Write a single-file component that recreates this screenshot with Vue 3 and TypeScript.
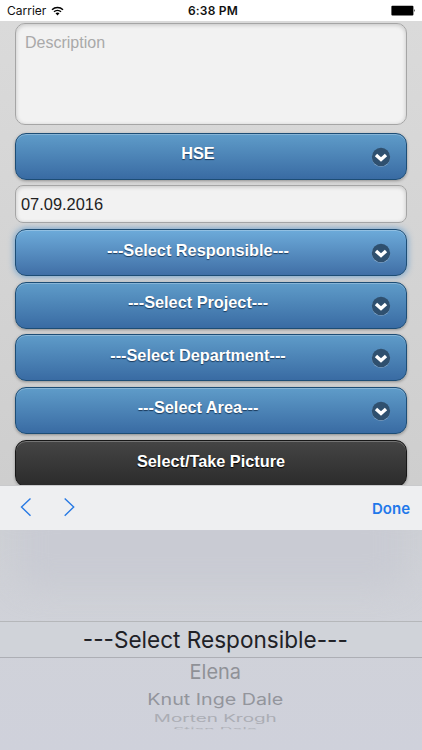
<script setup lang="ts">
interface SelectField {
  id: string
  label: string
  focused?: boolean
}

interface WheelRow {
  text: string
  width: number
  baseline: number
  size: number
  squash: number
  color: string
}

const category: SelectField = { id: 'category', label: 'HSE' }

const fields: SelectField[] = [
  { id: 'responsible', label: '---Select Responsible---', focused: true },
  { id: 'project', label: '---Select Project---' },
  { id: 'department', label: '---Select Department---' },
  { id: 'area', label: '---Select Area---' },
]

// Rows turn away from the viewer below the selection band.
const wheel: WheelRow[] = [
  { text: '---Select Responsible---', width: 265, baseline: 118.4, size: 23.3, squash: 1, color: '#202126' },
  { text: 'Elena', width: 51.5, baseline: 149.2, size: 21, squash: 0.97, color: '#8f9197' },
  { text: 'Knut Inge Dale', width: 136, baseline: 174.8, size: 20, squash: 0.8, color: '#93959c' },
  { text: 'Morten Krogh', width: 123, baseline: 192.4, size: 19, squash: 0.54, color: '#abadb4' },
]
const lastRow: WheelRow = { text: 'Stian Dale', width: 84, baseline: 201.8, size: 18, squash: 0.32, color: '#b0b2b9' }
</script>

<template>
  <div class="phone">
    <header class="status">
      <div class="carrier">
        <span>Carrier</span>
        <svg class="wifi" width="13" height="10" viewBox="0 0 13 10">
          <path d="M1 3.7a8 8 0 0 1 11 0" />
          <path d="M3 5.8a5.2 5.2 0 0 1 7 0" />
          <path class="dot" d="M4.5 7.3a3 3 0 0 1 4 0l-2 2.1z" />
        </svg>
      </div>
      <div class="clock">6:38 PM</div>
      <svg class="battery" width="25" height="11" viewBox="0 0 25 11">
        <rect x="0.4" y="0.7" width="22" height="9.8" rx="1" />
        <path d="M23.2 4.1q1.4 1.4 0 3z" />
      </svg>
    </header>

    <main class="form">
      <div class="description">Description</div>

      <div class="button category">
        <span class="label">{{ category.label }}</span>
        <svg class="chevron" width="20" height="20" viewBox="0 0 20 20">
          <circle class="glint" cx="10" cy="10.7" r="9.2" />
          <circle class="disc" cx="10" cy="10" r="9.2" />
          <path d="M5 7.9 10 12.5l5-4.6" />
        </svg>
      </div>

      <div class="date">07.09.2016</div>

      <div class="stack">
        <div v-for="field in fields" :key="field.id" class="button" :class="{ focused: field.focused }">
          <span class="label">{{ field.label }}</span>
          <svg class="chevron" width="20" height="20" viewBox="0 0 20 20">
            <circle class="glint" cx="10" cy="10.7" r="9.2" />
            <circle class="disc" cx="10" cy="10" r="9.2" />
            <path d="M5 7.9 10 12.5l5-4.6" />
          </svg>
        </div>
        <div class="button dark">
          <span class="label">Select/Take Picture</span>
        </div>
      </div>
    </main>

    <nav class="toolbar">
      <svg class="arrows" width="56" height="20" viewBox="0 0 56 20">
        <path d="M10.5 1.5 1.5 10l9 8.7" />
        <path d="M44.7 1.5l9 8.5-9 8.7" />
      </svg>
      <span class="done">Done</span>
    </nav>

    <section class="picker">
      <div class="haze"></div>
      <div class="band"></div>
      <svg class="wheel" width="422" height="220" viewBox="0 0 422 220">
        <defs>
          <clipPath id="edge"><rect x="0" y="0" width="422" height="199.3" /></clipPath>
        </defs>
        <text
          v-for="row in wheel"
          :key="row.text"
          text-anchor="middle"
          lengthAdjust="spacingAndGlyphs"
          :textLength="row.width"
          :font-size="row.size"
          :fill="row.color"
          :transform="`translate(215.3 ${row.baseline}) scale(1 ${row.squash})`"
        >{{ row.text }}</text>
        <g clip-path="url(#edge)">
          <text
            text-anchor="middle"
            lengthAdjust="spacingAndGlyphs"
            :textLength="lastRow.width"
            :font-size="lastRow.size"
            :fill="lastRow.color"
            :transform="`translate(215 ${lastRow.baseline}) scale(1 ${lastRow.squash})`"
          >{{ lastRow.text }}</text>
        </g>
      </svg>
    </section>
  </div>
</template>

<style>
body {
  margin: 0;
  overflow: hidden;
}
</style>

<style scoped>
.phone {
  width: 422px;
  height: 750px;
  display: flex;
  flex-direction: column;
  overflow: hidden;
  font-family: "Liberation Sans", Arial, sans-serif;
}

.status {
  flex: none;
  height: 21px;
  box-sizing: border-box;
  padding: 0 6px 0 7px;
  display: grid;
  grid-template-columns: 1fr auto 1fr;
  align-items: center;
  background: #fff;
  color: #111;
  font-family: Inter, sans-serif;
  font-size: 12px;
  line-height: 21px;
}

.carrier {
  display: flex;
  align-items: center;
  gap: 5px;
}

.wifi path {
  fill: none;
  stroke: #000;
  stroke-width: 1.5;
}

.wifi .dot {
  fill: #000;
  stroke: none;
}

.clock {
  padding-left: 3px;
  font-weight: 600;
  letter-spacing: 0.2px;
}

.battery {
  justify-self: end;
}

.form {
  flex: none;
  height: 464px;
  box-sizing: border-box;
  padding: 2px 15px 0;
  overflow: hidden;
  background: linear-gradient(#dadada, #cecece);
}

.description,
.date {
  box-sizing: border-box;
  border: 1px solid #a5a5a5;
  background: #f2f2f2;
  box-shadow: inset 0 1px 4px rgba(0, 0, 0, 0.2);
  font-size: 16px;
}

.description {
  height: 102px;
  padding: 10px 9px;
  border-radius: 10px;
  color: #a9a9a9;
  line-height: 18px;
}

.date {
  height: 38px;
  margin-bottom: 6px;
  padding: 0 5px;
  border-radius: 8px;
  color: #222;
  font-size: 16.4px;
  line-height: 37px;
}

.button {
  flex: none;
  height: 47px;
  box-sizing: border-box;
  display: grid;
  grid-template-columns: 25px 1fr 25px;
  align-items: center;
  padding: 0 15px 0 14px;
  border: 1px solid #1d4d75;
  border-radius: 11px;
  background: linear-gradient(#5f9cc9, #396ba3);
  box-shadow: inset 0 1px 0 rgba(255, 255, 255, 0.25), 0 1px 3px rgba(0, 0, 0, 0.32);
  color: #fff;
}

.category {
  margin: 8px 0 5px;
}

.stack {
  display: flex;
  flex-direction: column;
  gap: 5.65px;
}

.label {
  grid-column: 2;
  padding-bottom: 6px;
  text-align: center;
  font-size: 16.3px;
  font-weight: 700;
  line-height: 20px;
  white-space: nowrap;
  text-shadow: 0 1px 1px rgba(15, 40, 70, 0.8);
}

.stack .label,
.category .label {
  margin-left: -25px;
}

.category .label {
  padding-bottom: 7px;
}

.chevron {
  justify-self: end;
  margin-top: 1px;
}

.chevron .disc {
  fill: #2f506f;
}

.chevron .glint {
  fill: rgba(255, 255, 255, 0.35);
}

.chevron path {
  fill: none;
  stroke: #fff;
  stroke-width: 3.4;
}

.focused {
  background: linear-gradient(#6dabda, #406fa6);
  box-shadow: inset 0 1px 0 rgba(255, 255, 255, 0.25), 0 0 7px #5b97cc;
}

.button.dark {
  border-color: #171717;
  background: linear-gradient(#454545, #2b2b2b);
}

.stack .dark .label {
  margin-left: 1px;
  padding-bottom: 5px;
  text-shadow: 0 1px 1px #000;
}

.toolbar {
  flex: none;
  height: 45px;
  box-sizing: border-box;
  padding: 0 12px 0 20px;
  display: flex;
  align-items: center;
  justify-content: space-between;
  border-top: 1px solid #c9cacc;
  background: #eeeff1;
}

.arrows {
  margin-bottom: 2px;
}

.arrows path {
  fill: none;
  stroke: #2779e4;
  stroke-width: 1.4;
}

.done {
  color: #1f78ea;
  font-family: Inter, sans-serif;
  font-size: 15px;
  font-weight: 600;
}

.picker {
  position: relative;
  flex: none;
  height: 220px;
  overflow: hidden;
  background: linear-gradient(#ced0d5, #d0d2d9 45%, #cfd1db);
}

.haze {
  position: absolute;
  top: -30px;
  left: 18px;
  right: 18px;
  height: 88px;
  border-radius: 20px;
  background: #c9cbd3;
  filter: blur(14px);
}

.band {
  position: absolute;
  top: 91px;
  left: 0;
  right: 0;
  height: 37px;
  box-sizing: border-box;
  border-top: 1px solid #b5b7ba;
  border-bottom: 1px solid #adafb5;
  background: #d0d3d9;
}

.wheel {
  position: absolute;
  inset: 0;
  font-family: Inter, sans-serif;
}
</style>
